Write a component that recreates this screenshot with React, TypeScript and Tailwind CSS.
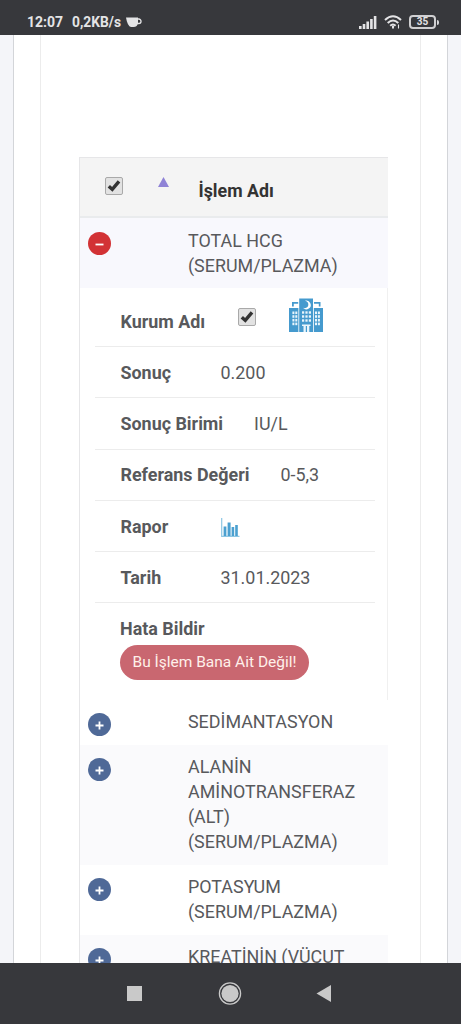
import { useState } from "react";

interface DetailProps {
  label: string;
  children: React.ReactNode;
  valueClass?: string;
}

const rows = [
  { name: ["SEDİMANTASYON"], shaded: false },
  { name: ["ALANİN", "AMİNOTRANSFERAZ", "(ALT)", "(SERUM/PLAZMA)"], shaded: true },
  { name: ["POTASYUM", "(SERUM/PLAZMA)"], shaded: false },
  { name: ["KREATİNİN (VÜCUT"], shaded: true },
];

function StatusBar() {
  return (
    <header className="flex h-[35px] shrink-0 items-center bg-[#37383c] pt-[9px] pr-[22px] pl-[27px] text-[#e4e4e6]">
      <span className="w-[45px] text-[14px] leading-4 font-bold">12:07</span>
      <span className="w-[54px] text-[13.8px] leading-4 font-bold whitespace-nowrap">0,2KB/s</span>
      <svg width="16" height="11" viewBox="0 0 16 11" fill="currentColor">
        <path d="M0 0.5H12V5.5Q11.5 10 7.5 10H5Q1.5 9.5 0 0.5Z" />
        <path d="M11.5 2H12.8A2 2 0 0 1 12.8 6.5H11" fill="none" stroke="currentColor" strokeWidth="1.3" />
      </svg>
      <div className="ml-auto flex items-center">
        <svg width="18" height="13" viewBox="0 0 18 13" fill="currentColor">
          <rect x="0" y="10" width="2.6" height="3" />
          <rect x="3.7" y="8" width="2.6" height="5" />
          <rect x="7.4" y="5.5" width="2.6" height="7.5" />
          <rect x="11.1" y="3" width="2.6" height="10" />
          <rect x="14.8" y="0" width="2.6" height="13" />
        </svg>
        <svg className="ml-[7px]" width="18" height="14" viewBox="0 0 18 14" fill="none" stroke="currentColor" strokeWidth="2">
          <path d="M1 5Q9-2.5 17 5" />
          <path d="M3.7 8Q9 3 14.3 8" />
          <path d="M6.2 10.8Q9 8.3 11.6 10.8" />
          <path d="M9 10.8V13.5" />
          <path d="M14.5 9.5V13.5" strokeWidth="1.1" />
        </svg>
        <span className="ml-[7px] flex h-[14px] w-[27px] items-center justify-center rounded-[4px] border-2 border-[#d0d0d2] text-[10px] leading-[10px] font-bold">
          35
        </span>
        <span className="ml-px h-[5px] w-[2px] rounded-r bg-[#d8d8da]" />
      </div>
    </header>
  );
}

function Check({ className = "" }: { className?: string }) {
  const [on, setOn] = useState(true);
  return (
    <button
      onClick={() => setOn(!on)}
      className={`flex size-[18px] shrink-0 items-center justify-center rounded-[2px] border border-[#a9a9a9] bg-[#e2e2e2] ${className}`}
    >
      {on && (
        <svg width="14" height="14" viewBox="0 0 14 14" fill="none" stroke="#333" strokeWidth="3.4">
          <path d="M1.8 7.2L5.3 10.4L12 2.4" />
        </svg>
      )}
    </button>
  );
}

function HospitalIcon() {
  return (
    <svg width="35" height="34" viewBox="0 0 35 34">
      <g fill="#459ace">
        <path d="M10.2 0.5H24V34H10.2Z" />
        <path d="M0 10H9.4V34H0ZM24.8 10H34V34H24.8Z" />
        <path d="M3 4H9.2V5.8H4.8V8.5H3ZM25 4H31.5V8.5H29.8V5.8H25Z" />
      </g>
      <path d="M15.8 2.8A4.4 4.4 0 1 1 14 9.8A3.7 3.7 0 1 0 15.8 2.8Z" fill="#fff" />
      <g fill="#e9f5fc">
        {[13.5, 17.2, 20.9, 24.6].map((y) => (
          <g key={y}>
            <rect x="3.4" y={y} width="2" height="2.6" />
            <rect x="6.3" y={y} width="2" height="2.6" />
            <rect x="26" y={y} width="2" height="2.6" />
            <rect x="28.9" y={y} width="2" height="2.6" />
          </g>
        ))}
        {[13.3, 17.3, 21.3].map((y) => (
          <g key={y}>
            <rect x="13" y={y} width="2.2" height="2.4" />
            <rect x="16.4" y={y} width="2.2" height="2.4" />
            <rect x="19.8" y={y} width="2.2" height="2.4" />
          </g>
        ))}
        <path d="M13 26.5H21.5V28H20.3V34H18V28H16.8V34H14.5V28H13Z" />
      </g>
    </svg>
  );
}

function ChartIcon() {
  return (
    <svg className="mt-[2px]" width="19" height="19" viewBox="0 0 19 19">
      <path d="M0.7 0V18.3H18.5" fill="none" stroke="#8cc6e4" strokeWidth="1.2" />
      <path d="M2.6 8.5H5.4V18H2.6ZM6.6 4.5H9.6V18H6.6ZM10.6 9H13.2V18H10.6ZM14.2 7H16.8V18H14.2Z" fill="#4ba0d0" />
    </svg>
  );
}

function Toggle({ open = false }: { open?: boolean }) {
  return (
    <span className={`flex size-[23px] shrink-0 items-center justify-center rounded-full ${open ? "bg-[#d23235]" : "bg-[#4f6997]"}`}>
      <svg width="9" height="9" viewBox="0 0 9 9" stroke="#fff" strokeWidth="1.8" className="mt-[2px]">
        <path d={open ? "M0.5 4.5H8.5" : "M0.5 4.5H8.5M4.5 0.5V8.5"} />
      </svg>
    </span>
  );
}

function Detail({ label, children, valueClass = "" }: DetailProps) {
  return (
    <li className="flex h-[51.3px] items-center border-b border-[#ececec] pl-[25.5px]">
      <span className="min-w-[100px] font-bold whitespace-nowrap">{label}</span>
      <span className={valueClass}>{children}</span>
    </li>
  );
}

export default function App() {
  return (
    <div className="flex h-[1024px] w-[461px] flex-col overflow-hidden bg-[#f4f5f9] font-['Roboto',sans-serif] text-[#58595c]">
      <StatusBar />

      <main className="mr-[13px] ml-[13px] min-h-0 flex-1 overflow-hidden border-x border-[#d3d5d9] bg-white px-[26px]">
        <div className="h-full border-x border-[#ececec] pt-[122px] pr-[32px] pl-[38px]">
          <section className="w-[309px] border-t border-l border-[#e6e6e8] text-[17.9px] leading-[25px]">
            <div className="flex h-[60px] border-b-2 border-[#e9ebed] bg-[#f4f4f4]">
              <Check className="mt-[19px] ml-[25px]" />
              <svg className="mt-[19px] ml-[35px]" width="11" height="10" viewBox="0 0 11 10">
                <path d="M5.5 0L11 10H0Z" fill="#8f83d6" />
              </svg>
              <span className="mt-[19.5px] ml-[29.5px] text-[17.8px] font-bold text-[#333]">İşlem Adı</span>
            </div>

            <div className="flex h-[70px] bg-[#f8f8fd] pt-[10px] pl-[8px]">
              <div className="mt-[4px]"><Toggle open /></div>
              <p className="ml-[77px]">TOTAL HCG<br />(SERUM/PLAZMA)</p>
            </div>

            <div className="h-[412px] border-r border-[#f0f0f0] pr-[12px] pl-[15px]">
              <ul>
                <li className="flex h-[59px] border-b border-[#ececec] pl-[25.5px]">
                  <span className="mt-[21px] w-[117.5px] text-[17.9px] font-bold">Kurum Adı</span>
                  <Check className="mt-[20px]" />
                  <span className="mt-[10px] ml-[33px]"><HospitalIcon /></span>
                </li>
                <Detail label="Sonuç">0.200</Detail>
                <Detail label="Sonuç Birimi" valueClass="ml-[31px]">IU/L</Detail>
                <Detail label="Referans Değeri" valueClass="ml-[31px]">0-5,3</Detail>
                <Detail label="Rapor"><ChartIcon /></Detail>
                <Detail label="Tarih">31.01.2023</Detail>
                <li className="pt-[13px] pl-[25px]">
                  <span className="block font-bold">Hata Bildir</span>
                  <button className="mt-[4px] h-[35px] w-[189px] rounded-full bg-[#c96770] text-[15.5px] whitespace-nowrap text-[#fff0ea]">
                    Bu İşlem Bana Ait Değil!
                  </button>
                </li>
              </ul>
            </div>

            {rows.map((row) => (
              <div key={row.name[0]} className={`flex pt-[9px] pb-[11px] pl-[8px] ${row.shaded ? "bg-[#fafafc]" : "bg-white"}`}>
                <div className="mt-[4px] h-[21px]"><Toggle /></div>
                <p className="ml-[77px] whitespace-nowrap">
                  {row.name.map((line) => (
                    <span key={line} className="block">{line}</span>
                  ))}
                </p>
              </div>
            ))}
          </section>
        </div>
      </main>

      <nav className="flex h-[61px] shrink-0 items-center bg-[#37383c]">
        <svg width="461" height="61" viewBox="0 0 461 61" fill="#c9c9c9">
          <rect x="127" y="23" width="15" height="15" />
          <circle cx="230" cy="30.5" r="8.6" />
          <circle cx="230" cy="30.5" r="10.6" fill="none" stroke="#c9c9c9" strokeWidth="1.3" />
          <path d="M316.5 30.5L331 22V39Z" />
        </svg>
      </nav>
    </div>
  );
}
